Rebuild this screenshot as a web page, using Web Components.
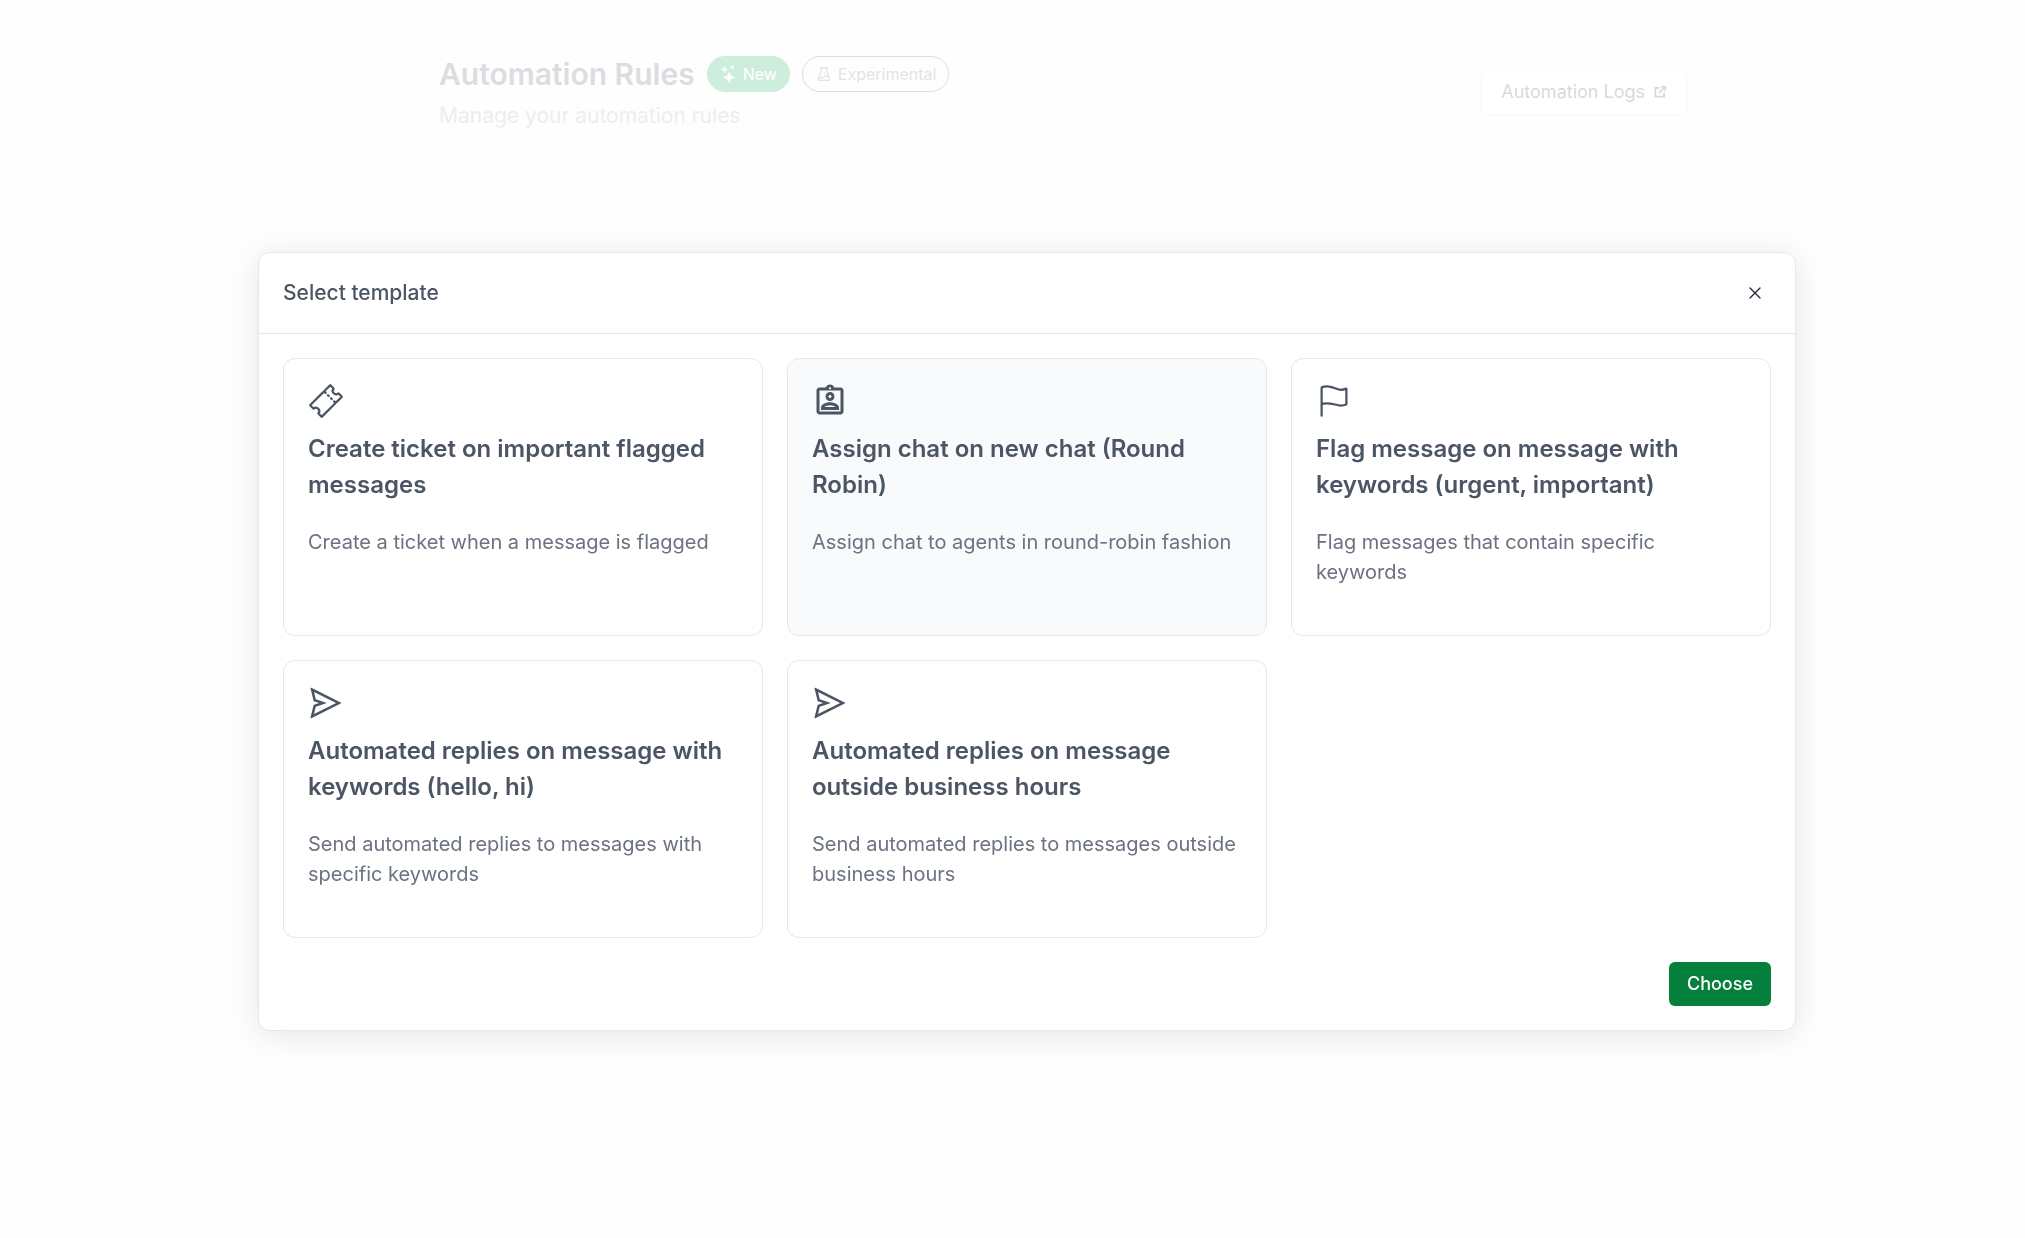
<!DOCTYPE html>
<html lang="en">
<head>
<meta charset="utf-8">
<meta name="viewport" content="width=device-width, initial-scale=1">
<title>Automation Rules</title>
<style>
  body {
    margin: 0;
    min-height: 100vh;
    background: #f7f7f8;
    font-family: Inter, "Liberation Sans", sans-serif;
    color: #4b5563;
  }
</style>
</head>
<body>
<page-header>
  <span slot="title">Automation Rules</span>
  <status-badge slot="badges" variant="solid" icon="stars">New</status-badge>
  <status-badge slot="badges" icon="flask">Experimental</status-badge>
  <span slot="subtitle">Manage your automation rules</span>
  <link-button slot="actions" href="#logs">Automation Logs</link-button>
</page-header>

<modal-dialog>
  <span slot="title">Select template</span>
  <template-card icon="ticket">
    <span slot="title">Create ticket on important flagged messages</span>
    Create a ticket when a message is flagged
  </template-card>
  <template-card icon="assign" selected>
    <span slot="title">Assign chat on new chat (Round Robin)</span>
    Assign chat to agents in round-robin fashion
  </template-card>
  <template-card icon="flag">
    <span slot="title">Flag message on message with keywords (urgent, important)</span>
    Flag messages that contain specific keywords
  </template-card>
  <template-card icon="send">
    <span slot="title">Automated replies on message with keywords (hello, hi)</span>
    Send automated replies to messages with specific keywords
  </template-card>
  <template-card icon="send">
    <span slot="title">Automated replies on message outside business hours</span>
    Send automated replies to messages outside business hours
  </template-card>
</modal-dialog>

<script>
const ICONS = {
  stars: `<svg viewBox="0 0 16 16" fill="currentColor"><path d="M7.657 6.247c.11-.33.576-.33.686 0l.645 1.937a2.89 2.89 0 0 0 1.829 1.828l1.936.645c.33.11.33.576 0 .686l-1.937.645a2.89 2.89 0 0 0-1.828 1.829l-.645 1.936a.361.361 0 0 1-.686 0l-.645-1.937a2.89 2.89 0 0 0-1.828-1.828l-1.937-.645a.361.361 0 0 1 0-.686l1.937-.645a2.89 2.89 0 0 0 1.828-1.828zM3.794 1.148a.217.217 0 0 1 .412 0l.387 1.162c.173.518.579.924 1.097 1.097l1.162.387a.217.217 0 0 1 0 .412l-1.162.387A1.73 1.73 0 0 0 4.593 5.69l-.387 1.162a.217.217 0 0 1-.412 0L3.407 5.69A1.73 1.73 0 0 0 2.31 4.593l-1.162-.387a.217.217 0 0 1 0-.412l1.162-.387A1.73 1.73 0 0 0 3.407 2.31zM10.863.099a.145.145 0 0 1 .274 0l.258.774c.115.346.386.617.732.732l.774.258a.145.145 0 0 1 0 .274l-.774.258a1.16 1.16 0 0 0-.732.732l-.258.774a.145.145 0 0 1-.274 0l-.258-.774a1.16 1.16 0 0 0-.732-.732L9.1 2.137a.145.145 0 0 1 0-.274l.774-.258c.346-.115.617-.386.732-.732z"/></svg>`,
  flask: `<svg viewBox="0 0 1024 1024" fill="currentColor"><path d="M512 472a40 40 0 1 0 80 0 40 40 0 1 0-80 0zm367 352.9L696.3 352V178H768v-68H256v68h71.7v174L145 824.9c-2.8 7.4-4.3 15.2-4.3 23.1 0 35.3 28.7 64 64 64h614.6c7.9 0 15.7-1.5 23.1-4.3 33-12.7 49.4-49.8 36.6-82.8zM395.7 364.7V180h232.6v184.7L719.2 600c-20.7-5.3-42.1-8-63.9-8-61.2 0-119.2 21.5-165.3 60a188.78 188.78 0 0 1-121.3 43.9c-32.7 0-64.1-8.3-91.8-23.7l118.8-307.5zM210.5 844l41.7-107.8c35.7 18.1 75.4 27.8 116.6 27.8 61.2 0 119.2-21.5 165.3-60 33.9-28.2 76.3-43.9 121.3-43.9 35 0 68.4 9.5 97.6 27.1L813.5 844h-603z"/></svg>`,
  external: `<svg viewBox="0 0 24 24" fill="none" stroke="currentColor" stroke-width="3"><path d="M11 5H4v15h15v-7"/><path d="M14 3h7v7M21 3 10 14"/></svg>`,
  close: `<svg viewBox="0 0 12 12" fill="none" stroke="currentColor" stroke-width="1.4" stroke-linecap="round"><path d="M1 1l10 10M11 1L1 11"/></svg>`,
  ticket: `<svg viewBox="0 0 512 512" fill="none" stroke="currentColor" stroke-width="32" stroke-miterlimit="10"><path d="M366.05 146a46.7 46.7 0 0 1-2.42-63.42 3.87 3.87 0 0 0-.22-5.26l-44.13-44.18a3.89 3.89 0 0 0-5.5 0l-70.34 70.34a23.62 23.62 0 0 0-5.71 9.24 23.66 23.66 0 0 1-14.95 15 23.7 23.7 0 0 0-9.25 5.71L33.14 313.78a3.89 3.89 0 0 0 0 5.5l44.13 44.13a3.87 3.87 0 0 0 5.26.22 46.69 46.69 0 0 1 65.84 65.84 3.87 3.87 0 0 0 .22 5.26l44.13 44.13a3.89 3.89 0 0 0 5.5 0l180.4-180.39a23.7 23.7 0 0 0 5.71-9.25 23.66 23.66 0 0 1 14.95-15 23.62 23.62 0 0 0 9.24-5.71l70.34-70.34a3.89 3.89 0 0 0 0-5.5l-44.13-44.13a3.87 3.87 0 0 0-5.26-.22 46.7 46.7 0 0 1-63.42-2.32z"/><path stroke-linecap="round" d="M250.5 140.44l-16.51-16.51M294.52 184.46l-11-11M338.54 228.49l-11-11M388.07 278.01l-16.51-16.51"/></svg>`,
  assign: `<svg viewBox="0 0 24 24" fill="currentColor"><path d="M19 3h-4.18C14.4 1.84 13.3 1 12 1s-2.4.84-2.82 2H5c-1.1 0-2 .9-2 2v14c0 1.1.9 2 2 2h14c1.1 0 2-.9 2-2V5c0-1.1-.9-2-2-2zm-7-.25c.41 0 .75.34.75.75s-.34.75-.75.75-.75-.34-.75-.75.34-.75.75-.75zM19 19H5V5h14v14zM12 6c-1.65 0-3 1.35-3 3s1.35 3 3 3 3-1.35 3-3-1.35-3-3-3zm0 4c-.55 0-1-.45-1-1s.45-1 1-1 1 .45 1 1-.45 1-1 1zm-6 6.47V18h12v-1.53c0-2.5-3.97-3.58-6-3.58s-6 1.07-6 3.58zM8.31 16c.69-.56 2.38-1.12 3.69-1.12s3.01.56 3.69 1.12H8.31z"/></svg>`,
  flag: `<svg viewBox="0 0 512 512" fill="none" stroke="currentColor" stroke-width="32" stroke-linecap="round" stroke-miterlimit="10"><path d="M80 464V68.14a8 8 0 0 1 4-6.9C91.81 56.66 112.92 48 160 48c64 0 145 48 192 48a199.53 199.53 0 0 0 77.23-15.77 2 2 0 0 1 2.77 1.85v219.36a4 4 0 0 1-2.39 3.65C421.37 308.7 392.33 320 352 320c-48 0-128-32-192-32s-80 16-80 16"/></svg>`,
  send: `<svg viewBox="0 0 1024 1024" fill="currentColor"><path d="M931.4 498.9L94.9 79.5c-3.4-1.7-7.3-2.1-11-1.2a15.99 15.99 0 0 0-11.7 19.3l86.2 352.2c1.3 5.3 5.2 9.6 10.4 11.3l147.7 50.7-147.6 50.7c-5.2 1.8-9.1 6-10.3 11.3L72.2 926.5c-.9 3.7-.5 7.6 1.2 10.9 3.9 7.9 13.5 11.1 21.5 7.2l836.5-417c3.1-1.5 5.6-4.1 7.2-7.1 3.9-8 .7-17.6-7.2-21.6zM170.8 826.3l50.3-205.6 295.2-101.3c2.3-.8 4.2-2.6 5-5 1.4-4.2-.8-8.7-5-10.2L221.1 403 171 198.2l628 314.9-628.2 313.2z"/></svg>`,
};

class PageHeader extends HTMLElement {
  connectedCallback() {
    this.attachShadow({ mode: "open" });
    this.shadowRoot.innerHTML = `
      <style>
        :host {
          display: block;
          padding: 54px 338px 0 439px;
        }
        header {
          display: flex;
          align-items: center;
          justify-content: space-between;
          padding-bottom: 37px;
          border-bottom: 1px solid #e5e7eb;
        }
        .heading {
          display: flex;
          align-items: center;
          gap: 12px;
        }
        h1 {
          margin: 0;
          font-size: 30px;
          line-height: 40px;
          font-weight: 600;
        }
        p {
          margin: 8px 0 0;
          font-size: 21px;
          line-height: 28px;
          color: #9ca3af;
        }
        @media (max-width: 1400px) {
          :host { padding: 32px 24px 0; }
        }
      </style>
      <header>
        <div>
          <div class="heading">
            <h1><slot name="title"></slot></h1>
            <slot name="badges"></slot>
          </div>
          <p><slot name="subtitle"></slot></p>
        </div>
        <slot name="actions"></slot>
      </header>
    `;
  }
}

class StatusBadge extends HTMLElement {
  connectedCallback() {
    this.attachShadow({ mode: "open" });
    this.shadowRoot.innerHTML = `
      <style>
        :host {
          display: inline-flex;
          align-items: center;
          gap: 5px;
          height: 34px;
          padding: 0 12px;
          border: 1px solid #4b5563;
          border-radius: 18px;
          font-size: 16px;
          line-height: 24px;
          color: #6b7280;
        }
        :host([variant="solid"]) {
          background: #05aa55;
          border-color: #05aa55;
          color: white;
        }
        svg {
          width: 18px;
          height: 18px;
        }
      </style>
      ${ICONS[this.getAttribute("icon")]}
      <slot></slot>
    `;
  }
}

class LinkButton extends HTMLElement {
  connectedCallback() {
    this.attachShadow({ mode: "open" });
    this.shadowRoot.innerHTML = `
      <style>
        :host {
          display: block;
        }
        a {
          display: flex;
          align-items: center;
          gap: 8px;
          padding: 10px 20px;
          border-radius: 6px;
          background: white;
          box-shadow: 0 1px 3px rgba(0, 0, 0, 0.15);
          font-size: 18px;
          line-height: 24px;
          color: #374151;
          text-decoration: none;
        }
        svg {
          width: 14px;
          height: 14px;
        }
      </style>
      <a href="${this.getAttribute("href")}"><slot></slot>${ICONS.external}</a>
    `;
  }
}

class TemplateCard extends HTMLElement {
  connectedCallback() {
    this.attachShadow({ mode: "open" });
    this.shadowRoot.innerHTML = `
      <style>
        :host {
          display: grid;
        }
        button {
          display: flex;
          flex-direction: column;
          align-items: flex-start;
          padding: 24px 24px 48px;
          border: 1px solid #e5e7eb;
          border-radius: 12px;
          background: white;
          font: inherit;
          color: #4b5563;
          text-align: left;
          cursor: pointer;
        }
        button:hover,
        :host([selected]) button {
          background: #f9fafc;
        }
        svg {
          width: 36px;
          height: 36px;
        }
        .title {
          margin-top: 12px;
          font-size: 24px;
          line-height: 36px;
          font-weight: 600;
        }
        .text {
          margin-top: 24px;
          font-size: 20px;
          line-height: 30px;
          color: #6b7280;
        }
      </style>
      <button type="button" aria-pressed="${this.hasAttribute("selected")}">
        ${ICONS[this.getAttribute("icon")]}
        <span class="title"><slot name="title"></slot></span>
        <span class="text"><slot></slot></span>
      </button>
    `;
  }
}

class ModalDialog extends HTMLElement {
  connectedCallback() {
    this.attachShadow({ mode: "open" });
    this.shadowRoot.innerHTML = `
      <style>
        :host {
          position: fixed;
          inset: 0;
          display: grid;
          align-items: center;
          box-sizing: border-box;
          padding: 44px 229px 0 258px;
          overflow: auto;
          background: rgba(255, 255, 255, 0.8);
        }
        section {
          border: 1px solid #e5e7eb;
          border-radius: 12px;
          background: white;
          box-shadow: 0 4px 32px rgba(0, 0, 0, 0.1);
        }
        header {
          display: flex;
          align-items: center;
          justify-content: space-between;
          padding: 24px;
          border-bottom: 1px solid #e5e7eb;
        }
        h2 {
          margin: 0;
          font-size: 21px;
          line-height: 32px;
          font-weight: 500;
        }
        .close {
          display: grid;
          place-items: center;
          width: 32px;
          height: 32px;
          padding: 0;
          border: 0;
          background: none;
          color: #1f2937;
          cursor: pointer;
        }
        .close svg {
          width: 12px;
          height: 12px;
        }
        .body {
          display: grid;
          grid-template-columns: repeat(3, minmax(0, 1fr));
          gap: 24px;
          padding: 24px;
        }
        footer {
          display: flex;
          justify-content: flex-end;
          padding: 0 24px 24px;
        }
        .choose {
          padding: 10px 18px;
          border: 0;
          border-radius: 6px;
          background: #04803c;
          color: white;
          font: 500 18px/24px Inter, "Liberation Sans", sans-serif;
          cursor: pointer;
        }
        @media (max-width: 1400px) {
          :host { padding: 24px; }
        }
      </style>
      <section role="dialog" aria-labelledby="heading">
        <header>
          <h2 id="heading"><slot name="title"></slot></h2>
          <button class="close" type="button" aria-label="Close">${ICONS.close}</button>
        </header>
        <div class="body"><slot></slot></div>
        <footer><button class="choose" type="button">Choose</button></footer>
      </section>
    `;

    this.shadowRoot.querySelector(".close").addEventListener("click", () => this.remove());

    // Only one template can be picked at a time
    this.addEventListener("click", (event) => {
      const card = event.target.closest("template-card");
      if (!card) return;
      this.querySelectorAll("template-card").forEach((item) => {
        item.toggleAttribute("selected", item === card);
        item.shadowRoot.querySelector("button").setAttribute("aria-pressed", item === card);
      });
    });
  }
}

customElements.define("page-header", PageHeader);
customElements.define("status-badge", StatusBadge);
customElements.define("link-button", LinkButton);
customElements.define("template-card", TemplateCard);
customElements.define("modal-dialog", ModalDialog);
</script>
</body>
</html>
